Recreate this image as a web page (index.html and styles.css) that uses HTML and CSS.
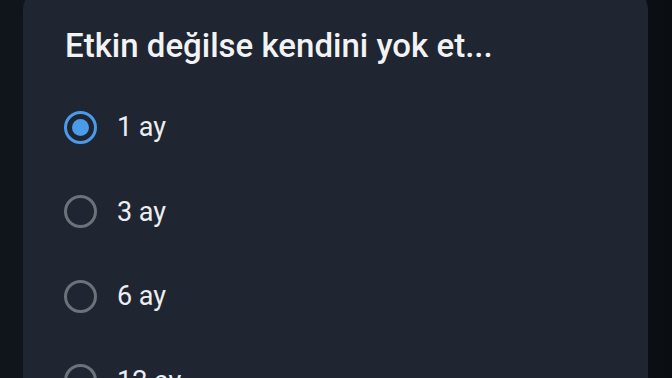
FILE: index.html
```html
<!DOCTYPE html>
<html lang="tr">
<head>
    <meta charset="UTF-8">
    <meta name="viewport" content="width=device-width, initial-scale=1.0">
    <title>Hesap</title>
    <link rel="stylesheet" href="styles.css">
</head>
<body>
    <div class="dialog">
        <h2 class="title">Etkin değilse kendini yok et...</h2>
        <div class="options">
            <label class="option">
                <input type="radio" name="ttl" checked>
                <span class="radio"></span>
                <span class="label">1 ay</span>
            </label>
            <label class="option">
                <input type="radio" name="ttl">
                <span class="radio"></span>
                <span class="label">3 ay</span>
            </label>
            <label class="option">
                <input type="radio" name="ttl">
                <span class="radio"></span>
                <span class="label">6 ay</span>
            </label>
            <label class="option">
                <input type="radio" name="ttl">
                <span class="radio"></span>
                <span class="label">12 ay</span>
            </label>
        </div>
    </div>
</body>
</html>
```

FILE: styles.css
```css
body {
    margin: 0;
    height: 100vh;
    overflow: hidden;
    background: linear-gradient(to right, #10141b 0%, #0f1319 90%, #0a0d12 100%);
    font-family: Roboto, "Noto Sans", sans-serif;
}
.dialog {
    margin: -14px 24px 0 23px;
    height: 420px;
    background-color: #1f2531;
    border-radius: 24px;
    padding: 0 0 0 42px;
}
.title {
    margin: 0;
    padding-top: 38px;
    font-size: 33px;
    font-weight: 500;
    color: #f2f3f5;
    line-height: 44px;
}
.options {
    margin-top: 17px;
    display: flex;
    flex-direction: column;
}
.option {
    display: flex;
    align-items: center;
    height: 84.5px;
    cursor: pointer;
}
.option input {
    display: none;
}
.radio {
    width: 27px;
    height: 27px;
    border: 3.5px solid #6c727a;
    border-radius: 50%;
    display: flex;
    align-items: center;
    justify-content: center;
    flex-shrink: 0;
    margin-left: -1px;
}
.option input:checked + .radio {
    border-color: #4a9be9;
}
.option input:checked + .radio::after {
    content: "";
    width: 17px;
    height: 17px;
    border-radius: 50%;
    background-color: #4a9be9;
}
.label {
    margin-left: 20px;
    font-size: 27px;
    color: #eceef1;
}
```
